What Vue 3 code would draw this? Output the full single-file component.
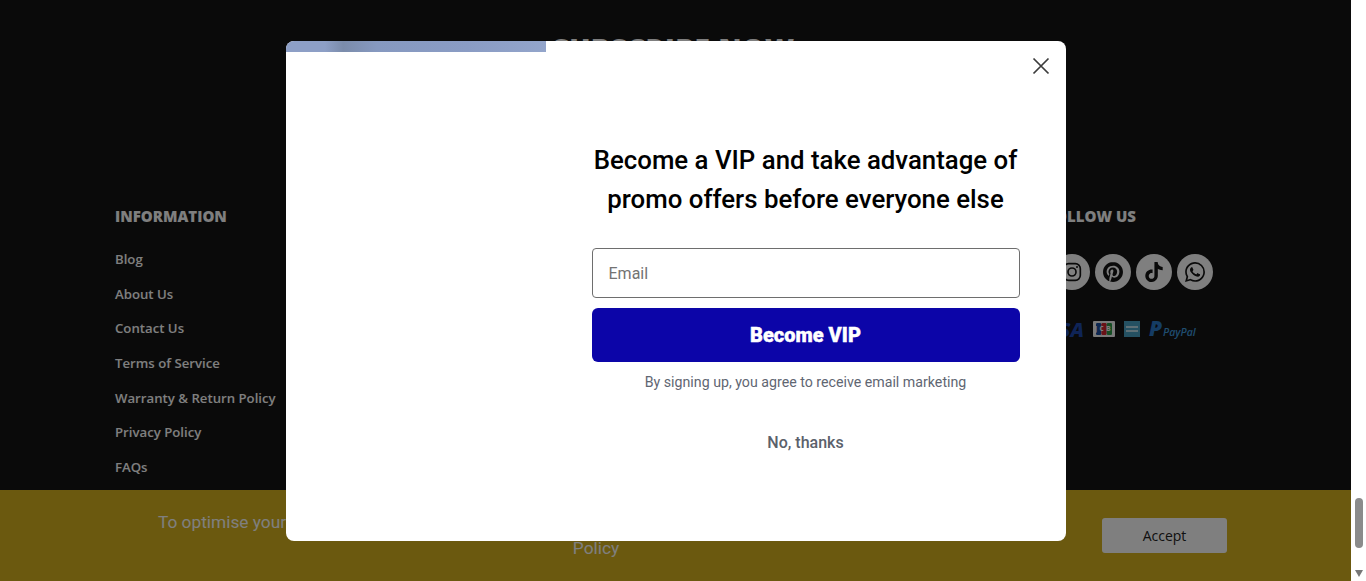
<template>
  <div class="page">
    <div class="site">
      <footer class="footer">
        <h2 class="subscribe-title">SUBSCRIBE NOW</h2>
        <div class="footer-cols">
          <div class="col-info">
            <h3 class="col-title">INFORMATION</h3>
            <ul class="links">
              <li v-for="link in links" :key="link">{{ link }}</li>
            </ul>
          </div>
          <div class="col-follow">
            <h3 class="col-title follow-title">FOLLOW US</h3>
            <div class="socials">
              <span v-for="icon in socials" :key="icon.name" class="social">
                <svg v-if="icon.name === 'instagram'" width="20" height="20" viewBox="0 0 24 24" fill="none" stroke="#141414" stroke-width="2">
                  <rect x="2" y="2" width="20" height="20" rx="6" />
                  <circle cx="12" cy="12" r="4.8" />
                  <circle cx="18" cy="6" r="1.2" fill="#141414" stroke="none" />
                </svg>
                <svg v-else width="20" height="20" viewBox="0 0 24 24" fill="#141414">
                  <path :d="icon.d" />
                </svg>
              </span>
            </div>
            <div class="payments">
              <span class="visa">VISA</span>
              <svg class="jcb" width="22" height="16" viewBox="0 0 22 16">
                <rect width="22" height="16" rx="1" fill="#f4f4f4" />
                <rect x="3" y="2" width="5.2" height="12" rx="1.2" fill="#1a4fa0" />
                <rect x="8.4" y="2" width="5.2" height="12" rx="1.2" fill="#d2232f" />
                <rect x="13.8" y="2" width="5.2" height="12" rx="1.2" fill="#2a9a48" />
                <text x="11" y="10.4" text-anchor="middle" font-size="6.5" font-weight="700" letter-spacing="2.4" fill="#fff">JCB</text>
              </svg>
              <svg class="amex" width="16" height="16" viewBox="0 0 16 16">
                <rect width="16" height="16" fill="#4aa3c4" />
                <rect x="2" y="5" width="12" height="2" fill="#bfe0ec" />
                <rect x="2" y="9" width="12" height="2" fill="#bfe0ec" />
              </svg>
              <span class="paypal"><b>P</b><i>PayPal</i></span>
            </div>
          </div>
        </div>
      </footer>
      <div class="cookie">
        <p class="cookie-text">
          To optimise your experience, we and our partners use cookies on this website. By continuing you agree to our Privacy<br />Policy
        </p>
        <button class="accept">Accept</button>
      </div>

      <div class="overlay">
        <div class="modal">
          <div class="modal-image">
            <div class="image-strip"></div>
          </div>
          <div class="modal-body">
            <svg class="close" width="18" height="18" viewBox="0 0 18 18" fill="none" stroke="#3c3c3c" stroke-width="1.7">
              <path d="M1.5 1.5l15 15M16.5 1.5l-15 15" />
            </svg>
            <h2 class="modal-title">Become a VIP and take advantage of promo offers before everyone else</h2>
            <div class="email">Email</div>
            <button class="vip">Become VIP</button>
            <p class="terms">By signing up, you agree to receive email marketing</p>
            <a class="no-thanks">No, thanks</a>
          </div>
        </div>
      </div>
    </div>
    <div class="scrollbar">
      <div class="thumb"></div>
      <div class="arrow-down"></div>
    </div>
  </div>
</template>

<script setup>
const links = [
  'Blog',
  'About Us',
  'Contact Us',
  'Terms of Service',
  'Warranty & Return Policy',
  'Privacy Policy',
  'FAQs'
]

const socials = [
  { name: 'instagram' },
  {
    name: 'pinterest',
    d: 'M12.017 0C5.396 0 .029 5.367.029 11.987c0 5.079 3.158 9.417 7.618 11.162-.105-.949-.199-2.403.041-3.439.219-.937 1.406-5.957 1.406-5.957s-.359-.72-.359-1.781c0-1.663.967-2.911 2.168-2.911 1.024 0 1.518.769 1.518 1.688 0 1.029-.653 2.567-.992 3.992-.285 1.193.6 2.165 1.775 2.165 2.128 0 3.768-2.245 3.768-5.487 0-2.861-2.063-4.869-5.008-4.869-3.41 0-5.409 2.562-5.409 5.199 0 1.033.394 2.143.889 2.741.099.12.112.225.085.345-.09.375-.293 1.199-.334 1.363-.053.225-.172.271-.401.165-1.495-.69-2.433-2.878-2.433-4.646 0-3.776 2.748-7.252 7.92-7.252 4.158 0 7.392 2.967 7.392 6.923 0 4.135-2.607 7.462-6.233 7.462-1.214 0-2.354-.629-2.758-1.379l-.749 2.848c-.269 1.045-1.004 2.352-1.498 3.146 1.123.345 2.306.535 3.55.535 6.607 0 11.985-5.365 11.985-11.987C23.97 5.39 18.592.026 11.985.026L12.017 0z'
  },
  {
    name: 'tiktok',
    d: 'M12.525.02c1.31-.02 2.61-.01 3.91-.02.08 1.53.63 3.09 1.75 4.17 1.12 1.11 2.7 1.62 4.24 1.79v4.03c-1.44-.05-2.89-.35-4.2-.97-.57-.26-1.1-.59-1.62-.93-.01 2.92.01 5.84-.02 8.75-.08 1.4-.54 2.79-1.35 3.94-1.31 1.92-3.58 3.17-5.91 3.21-1.43.08-2.86-.31-4.08-1.03-2.02-1.19-3.44-3.37-3.65-5.71-.02-.5-.03-1-.01-1.49.18-1.9 1.12-3.72 2.58-4.96 1.66-1.44 3.98-2.13 6.15-1.72.02 1.48-.04 2.96-.04 4.44-.99-.32-2.15-.23-3.02.37-.63.41-1.11 1.04-1.36 1.75-.21.51-.15 1.07-.14 1.61.24 1.64 1.82 3.02 3.5 2.87 1.12-.01 2.19-.66 2.77-1.61.19-.33.4-.67.41-1.06.1-1.79.06-3.57.07-5.36.01-4.03-.01-8.05.02-12.07z'
  },
  {
    name: 'whatsapp',
    d: 'M17.472 14.382c-.297-.149-1.758-.867-2.03-.967-.273-.099-.471-.148-.67.15-.197.297-.767.966-.94 1.164-.173.199-.347.223-.644.075-.297-.15-1.255-.463-2.39-1.475-.883-.788-1.48-1.761-1.653-2.059-.173-.297-.018-.458.13-.606.134-.133.298-.347.446-.52.149-.174.198-.298.298-.497.099-.198.05-.371-.025-.52-.075-.149-.669-1.612-.916-2.207-.242-.579-.487-.5-.669-.51-.173-.008-.371-.01-.57-.01-.198 0-.52.074-.792.372-.272.297-1.04 1.016-1.04 2.479 0 1.462 1.065 2.875 1.213 3.074.149.198 2.096 3.2 5.077 4.487.709.306 1.262.489 1.694.625.712.227 1.36.195 1.871.118.571-.085 1.758-.719 2.006-1.413.248-.694.248-1.289.173-1.413-.074-.124-.272-.198-.57-.347m-5.421 7.403h-.004a9.87 9.87 0 01-5.031-1.378l-.361-.214-3.741.982.998-3.648-.235-.374a9.86 9.86 0 01-1.51-5.26c.001-5.45 4.436-9.884 9.888-9.884 2.64 0 5.122 1.03 6.988 2.898a9.825 9.825 0 012.893 6.994c-.003 5.45-4.437 9.884-9.885 9.884m8.413-18.297A11.815 11.815 0 0012.05 0C5.495 0 .16 5.335.157 11.892c0 2.096.547 4.142 1.588 5.945L.057 24l6.305-1.654a11.882 11.882 0 005.683 1.448h.005c6.554 0 11.89-5.335 11.893-11.893a11.821 11.821 0 00-3.48-8.413z'
  }
]
</script>

<style>
html,
body {
  overflow: hidden;
  background: #fff;
}
</style>

<style scoped>
.page {
  display: flex;
  height: 581px;
  overflow: hidden;
  font-family: "Open Sans", "Liberation Sans", sans-serif;
}

.site {
  position: relative;
  flex: 1;
  min-width: 0;
  display: flex;
  flex-direction: column;
}

.footer {
  flex: 1;
  min-height: 0;
  overflow: hidden;
  background: #141414;
  color: #fff;
}

.subscribe-title {
  margin: 28px 0 0;
  padding-right: 4px;
  height: 40px;
  line-height: 40px;
  text-align: center;
  font-size: 28px;
  font-weight: 800;
  letter-spacing: 0.5px;
}

.footer-cols {
  display: flex;
  justify-content: space-between;
  margin-top: 136px;
  padding: 0 138px 0 115px;
}

.col-title {
  margin: 0;
  font-size: 15px;
  line-height: 24px;
  font-weight: 800;
}

.follow-title {
  margin-left: 11px;
}

.links {
  list-style: none;
  margin: 14px 0 0;
  padding: 0;
}

.links li {
  height: 34.67px;
  line-height: 34.67px;
  font-size: 13.2px;
  font-weight: 600;
}

.col-follow {
  width: 177px;
}

.socials {
  display: flex;
  gap: 5px;
  margin: 26px 0 0 18px;
}

.social {
  flex: none;
  width: 36px;
  height: 36px;
  border-radius: 50%;
  background: #fff;
  display: flex;
  align-items: center;
  justify-content: center;
}

.payments {
  display: flex;
  align-items: center;
  gap: 9px;
  margin-top: 31px;
  height: 16px;
}

.visa {
  width: 48px;
  text-align: right;
  font-size: 20px;
  font-style: italic;
  font-weight: 800;
  color: #1f49ad;
}

.paypal {
  display: flex;
  align-items: baseline;
  color: #3f9adf;
  font-size: 10.5px;
}

.paypal b {
  font-size: 21px;
  line-height: 16px;
  font-style: italic;
  font-weight: 800;
  color: #2a78c8;
}

.paypal i {
  margin-left: 1px;
  font-weight: 600;
}

.cookie {
  flex: none;
  height: 91px;
  background: #d6b21e;
  display: flex;
  align-items: flex-start;
  padding-left: 158px;
  box-sizing: border-box;
}

.cookie-text {
  width: 876px;
  margin: 19px 0 0;
  color: #fff;
  text-align: center;
  font-family: Roboto, "Liberation Sans", sans-serif;
  font-size: 17.3px;
  line-height: 26px;
  white-space: nowrap;
}

.accept {
  width: 125px;
  height: 35px;
  margin: 28px 0 0 68px;
  border: none;
  border-radius: 3px;
  background: #fff;
  color: #222;
  font-family: "Open Sans", "Liberation Sans", sans-serif;
  font-size: 14px;
}

.overlay {
  position: absolute;
  inset: 0;
  background: rgba(0, 0, 0, 0.5);
  display: flex;
  align-items: center;
  justify-content: center;
}

.modal {
  width: 780px;
  height: 500px;
  display: flex;
  background: #fff;
  border-radius: 8px;
  overflow: hidden;
}

.modal-image {
  flex: none;
  width: 260px;
}

.image-strip {
  height: 11px;
  background: linear-gradient(90deg, #8d9fc6 0%, #8d9fc6 15%, #7b8cab 22%, #8699c0 35%, #8a9cc4 70%, #93a5cb 100%);
}

.modal-body {
  position: relative;
  flex: 1;
  display: flex;
  flex-direction: column;
  align-items: center;
  padding: 100px 46px 0;
  box-sizing: border-box;
  font-family: Roboto, "Liberation Sans", sans-serif;
}

.close {
  position: absolute;
  top: 16px;
  right: 16px;
}

.modal-title {
  margin: 0 0 29px;
  width: 428px;
  text-align: center;
  color: #000;
  font-size: 25.8px;
  line-height: 39px;
  font-weight: 500;
}

.email {
  width: 100%;
  height: 50px;
  line-height: 50px;
  padding: 0 16px;
  box-sizing: border-box;
  border: 1px solid #6e6e6e;
  border-radius: 4px;
  color: #737373;
  font-size: 16px;
}

.vip {
  width: 100%;
  height: 54px;
  margin-top: 10px;
  border: none;
  border-radius: 6px;
  background: #0c05a8;
  color: #fff;
  font-family: Roboto, "Liberation Sans", sans-serif;
  font-size: 20px;
  font-weight: 900;
  -webkit-text-stroke: 0.4px #fff;
}

.terms {
  margin: 10px 0 0;
  color: #5f6672;
  font-size: 14.2px;
  line-height: 20px;
}

.no-thanks {
  margin-top: 41px;
  color: #5b616b;
  font-size: 16px;
  line-height: 20px;
  font-weight: 500;
}

.scrollbar {
  flex: none;
  width: 15px;
  background: #fff;
  display: flex;
  flex-direction: column;
  align-items: center;
  justify-content: flex-end;
}

.thumb {
  width: 8px;
  height: 50px;
  border-radius: 4px;
  background: #8b8b8b;
  margin-bottom: 22px;
}

.arrow-down {
  width: 0;
  height: 0;
  border-left: 4px solid transparent;
  border-right: 4px solid transparent;
  border-top: 7px solid #777;
  margin-bottom: 4px;
}
</style>
